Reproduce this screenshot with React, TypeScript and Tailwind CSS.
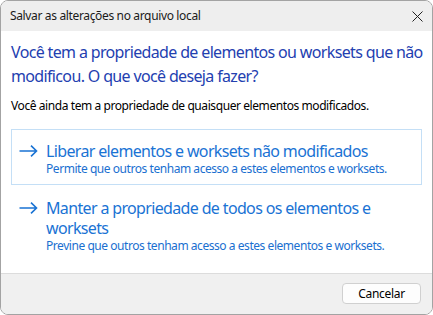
import React from "react";

const font = { fontFamily: '"Noto Sans", "Open Sans", sans-serif' };

function Arrow() {
  return (
    <svg width="19" height="12" viewBox="0 0 19 12" className="shrink-0">
      <path d="M0.5 6 H17.5 M12 0.7 L17.5 6 L12 11.3" fill="none" stroke="#1a73d4" strokeWidth="1.6" />
    </svg>
  );
}

export default function App() {
  return (
    <div className="w-[433px] h-[315px] bg-white" style={font}>
      <div className="w-full h-full flex flex-col border border-[#a3a3a3] rounded-[8px] overflow-hidden">
        <div className="h-[30px] shrink-0 bg-[#eeeeee] flex items-center justify-between pl-[9px] pr-[9px]">
          <span className="text-[12px] tracking-[-0.35px] text-[#1a1a1a] leading-none">Salvar as alterações no arquivo local</span>
          <svg width="11" height="11" viewBox="0 0 11 11">
            <path d="M0.5 0.5 L10.5 10.5 M10.5 0.5 L0.5 10.5" stroke="#222" strokeWidth="1" fill="none" />
          </svg>
        </div>
        <div className="flex-1 bg-white px-[10px] pt-[9px] flex flex-col">
          <div className="text-[16px] leading-[24px] tracking-[-0.65px] text-[#2340b0] whitespace-nowrap">
            Você tem a propriedade de elementos ou worksets que não
            <br />
            modificou. O que você deseja fazer?
          </div>
          <div className="mt-[10px] text-[12px] leading-[16px] tracking-[-0.42px] text-black whitespace-nowrap">
            Você ainda tem a propriedade de quaisquer elementos modificados.
          </div>
          <div className="mt-[15px] border border-[#c4dff6] pl-[7px] pr-[8px] pt-[11px] pb-[7px] flex gap-[8px]">
            <div className="h-[20px] flex items-center"><Arrow /></div>
            <div className="flex flex-col whitespace-nowrap">
              <span className="text-[16px] leading-[20px] tracking-[-0.65px] text-[#1a73d4]">Liberar elementos e worksets não modificados</span>
              <span className="text-[12px] leading-[16px] tracking-[-0.45px] text-[#1a6fd0]">Permite que outros tenham acesso a estes elementos e worksets.</span>
            </div>
          </div>
          <div className="mt-[1px] border border-transparent pl-[7px] pr-[8px] pt-[11px] pb-[7px] flex gap-[8px]">
            <div className="h-[20px] flex items-center"><Arrow /></div>
            <div className="flex flex-col whitespace-nowrap">
              <span className="text-[16px] leading-[20px] tracking-[-0.65px] text-[#1a73d4]">
                Manter a propriedade de todos os elementos e
                <br />
                worksets
              </span>
              <span className="text-[12px] leading-[16px] tracking-[-0.45px] text-[#1a6fd0]">Previne que outros tenham acesso a estes elementos e worksets.</span>
            </div>
          </div>
        </div>
        <div className="h-[41px] shrink-0 bg-[#f0f0f0] border-t border-[#dcdcdc] flex items-start justify-end pt-[9px] pr-[11px]">
          <button className="w-[79px] h-[21px] bg-[#fdfdfd] border border-[#d0d0d0] rounded-[4px] text-[12px] tracking-[-0.3px] text-black leading-none">
            Cancelar
          </button>
        </div>
      </div>
    </div>
  );
}
